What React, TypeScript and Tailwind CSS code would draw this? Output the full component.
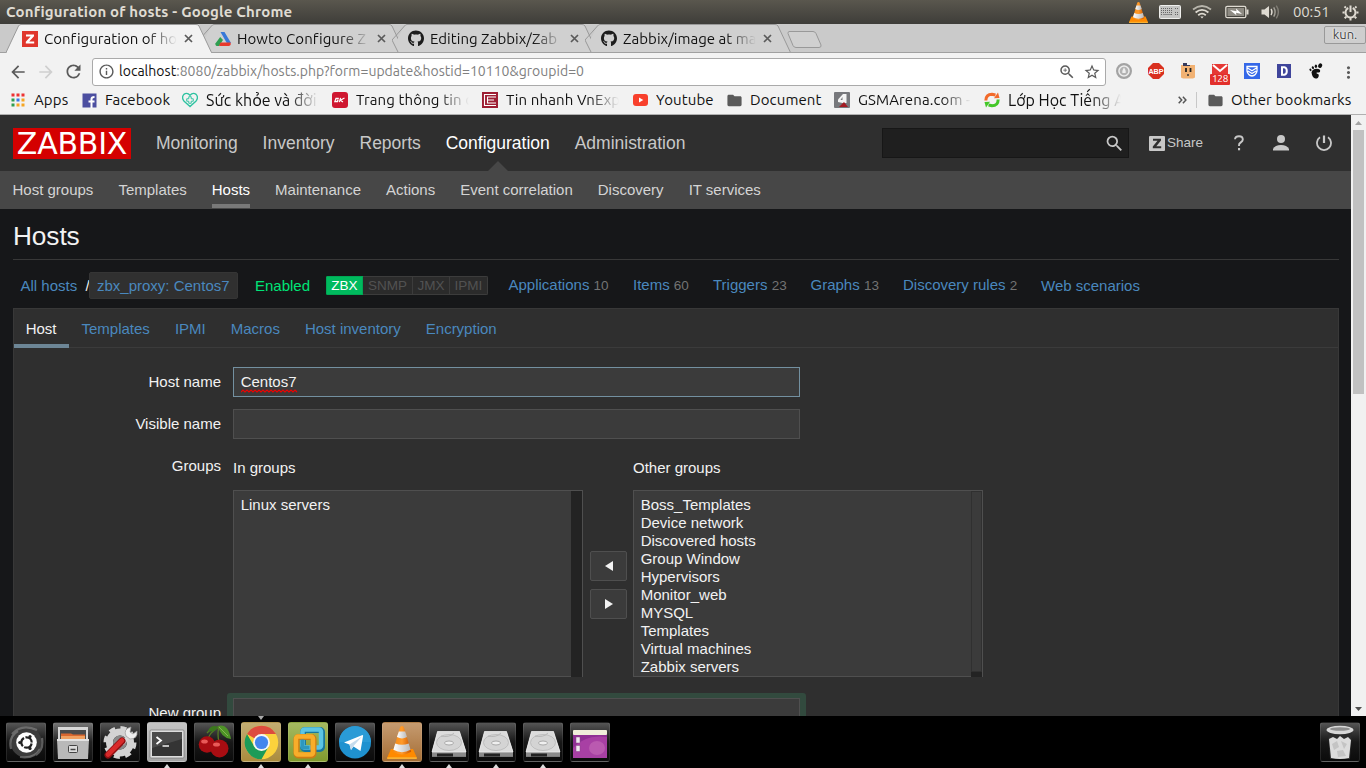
import React from "react";
import { FaGithub } from "react-icons/fa";
import { MdRefresh, MdArrowBack, MdArrowForward, MdInfoOutline, MdZoomIn, MdStarBorder, MdMoreVert, MdFolder, MdSearch } from "react-icons/md";

const fade = "[mask-image:linear-gradient(to_right,black_calc(100%-30px),transparent)]";

/* ---------- System bar ---------- */

function Cone({ size }: { size: number }) {
  return (
    <svg width={size} height={size} viewBox="0 0 32 36">
      <defs>
        <linearGradient id="coneBody" x1="0" x2="1">
          <stop offset="0" stopColor="#f58a12" />
          <stop offset=".5" stopColor="#ff9a2a" />
          <stop offset="1" stopColor="#c95400" />
        </linearGradient>
        <linearGradient id="coneWhite" x1="0" x2="1">
          <stop offset="0" stopColor="#fff" />
          <stop offset="1" stopColor="#b9b9b9" />
        </linearGradient>
      </defs>
      <path d="M4 25H28L32 34V36H0V34Z" fill="#ff8a00" />
      <path d="M0 34H32V36H0Z" fill="#f9b233" />
      <path d="M14 1Q16-1 18 1L26 28Q16 34 6 28Z" fill="url(#coneBody)" />
      <path d="M12.5 6H19.5L21.5 12Q16 15 10.5 12Z" fill="url(#coneWhite)" />
      <path d="M8.6 19Q16 22 23.4 19L25.4 26Q16 31 6.6 26Z" fill="url(#coneWhite)" />
    </svg>
  );
}

function SystemBar() {
  return (
    <div className="flex h-6 shrink-0 items-center bg-linear-to-b from-[#5a574e] to-[#3e3d39] pr-[7px] pl-[6px] text-[#dfdbd2]">
      <span className="text-[15px] font-bold tracking-[0.17px] whitespace-nowrap">Configuration of hosts - Google Chrome</span>
      <div className="ml-auto flex items-center">
        <div className="mr-[10px] flex"><Cone size={21} /></div>
        <svg className="mr-[11px]" width="22" height="14" viewBox="0 0 22 14">
          <rect x=".5" y=".5" width="21" height="13" rx="1" fill="#c4c4c2" stroke="#efefed" />
          <path d="M2 3.5H14M2 5.5H14M2 7.5H14M2 9.5H14M16 3.5H20M16 7.5H20M16 9.5H20" stroke="#666" strokeDasharray="1 1" />
          <path d="M4 9.5H12" stroke="#888" />
        </svg>
        <svg className="mr-[13px]" width="20" height="16" viewBox="0 0 20 16" fill="none" strokeWidth="1.8" stroke="#dfdbd2">
          <path d="M1 5.5Q10-1.5 19 5.5" stroke="#b8b5ac" />
          <path d="M3.6 8.5Q10 3.2 16.4 8.5" />
          <path d="M6.2 11.2Q10 8 13.8 11.2" />
          <path d="M8.3 12.5H11.7L10 14.6Z" fill="#dfdbd2" stroke="none" />
        </svg>
        <svg className="mr-[12px]" width="24" height="14" viewBox="0 0 24 14">
          <rect x=".8" y="1.3" width="20" height="11.4" rx="1.5" fill="none" stroke="#dfdbd2" strokeWidth="1.3" />
          <rect x="2.5" y="3" width="16.5" height="8" fill="#8e8b83" />
          <path d="M22.5 4.5V9.5" stroke="#dfdbd2" strokeWidth="2" />
          <path d="M5 5L11.5 6.2L11 3.6L17 9L11 7.7L11.4 10.2Z" fill="#fff" />
        </svg>
        <svg className="mr-[12px]" width="20" height="16" viewBox="0 0 20 16" fill="none">
          <path d="M.5 5.5H3.5L8 2V14L3.5 10.5H.5Z" fill="#dfdbd2" />
          <path d="M10 5Q12 8 10 11" stroke="#dfdbd2" strokeWidth="1.4" />
          <path d="M12.7 3.3Q15.5 8 12.7 12.7" stroke="#a5a299" strokeWidth="1.4" />
          <path d="M15.3 1.6Q19.5 8 15.3 14.4" stroke="#807d75" strokeWidth="1.4" />
        </svg>
        <span className="mr-[13px] w-[36px] text-[15px] tracking-[-0.2px]">00:51</span>
        <svg width="17" height="17" viewBox="0 0 17 17" fill="none" stroke="#dfdbd2">
          <path d="M6.3 4A5 5 0 1 0 10.7 4" strokeWidth="2" />
          <path d="M8.5 1.5V8" strokeWidth="2" />
          <path d="M3.9 3.9L2.5 2.5M13.1 3.9L14.5 2.5M2.6 8.5H.5M14.4 8.5H16.5M4.3 12.7L2.7 14.3M12.7 12.7L14.3 14.3M8.5 14V16.5" strokeWidth="2" />
        </svg>
      </div>
    </div>
  );
}

/* ---------- Browser chrome ---------- */

function Tab({ title, icon, active }: { title: string; icon: React.ReactNode; active?: boolean }) {
  return (
    <div className={`relative flex h-[29px] w-[193px] shrink-0 items-center pl-4 ${active ? "z-10" : ""}`}>
      <svg className="absolute top-0 left-0" width="207" height="29" viewBox="0 0 207 29">
        {active ? (
          <path d="M0 28.5L12.5 2Q13.5 .5 15 .5H190Q192 .5 193 2L205.5 28.5" fill="#f2f2f2" stroke="#999" />
        ) : (
          <path d="M5 16L12.5 2Q13.5 .5 15 .5H190Q192 .5 193 2L205.5 28.5H6L0 16" fill="#d0d0d0" stroke="none" />
        )}
        {!active && <path d="M0 16L6 28M0 16L12.5 2Q13.5 .5 15 .5H190Q192 .5 193 2L205.5 28.5" fill="none" stroke="#999" />}
        <path d={active ? "M1 28.5H205" : "M0 28.5H207"} stroke={active ? "#f2f2f2" : "#a0a0a0"} />
      </svg>
      <span className="relative flex size-4 items-center justify-center">{icon}</span>
      <span className={`relative ml-[6px] w-[133px] overflow-hidden pt-px text-[15px] leading-5 tracking-[0.03px] whitespace-nowrap text-[#111] ${fade}`}>{title}</span>
      <svg className="relative ml-[7px]" width="9" height="9" viewBox="0 0 9 9"><path d="M1 1L8 8M8 1L1 8" stroke="#5a5a5a" strokeWidth="1.7" /></svg>
    </div>
  );
}

function TabStrip() {
  return (
    <div className="relative flex h-[29px] shrink-0 bg-[#cacaca] pl-[6px] shadow-[inset_0_-1px_0_#a0a0a0]">
      <Tab active title="Configuration of ho" icon={
        <svg width="16" height="16"><rect width="16" height="16" fill="#e0362c" /><path d="M4 3.5H12V5.3L7.2 10.5H12.2V12.5H3.8V10.7L8.6 5.5H4Z" fill="#fff" /></svg>
      } />
      <Tab title="Howto Configure Z" icon={
        <svg width="16" height="16" viewBox="0 0 16 16">
          <path d="M5.5 1H9.5L16 12H11.8Z" fill="#3878d8" />
          <path d="M5.2 6L8 9L4 15H1.5Q0 14 .4 12.5Z" fill="#2e9e50" />
          <path d="M5.5 11.5H15.5Q16.5 14.6 14 15H4Z" fill="#e8382c" />
        </svg>
      } />
      <Tab title="Editing Zabbix/Zab" icon={<FaGithub size={17} color="#1c1c1c" />} />
      <Tab title="Zabbix/image at ma" icon={<FaGithub size={17} color="#1c1c1c" />} />
      <svg className="mt-[6px] ml-[9px]" width="36" height="19" viewBox="0 0 36 19"><path d="M2 1.5H26Q28 1.5 29 3.5L34 15Q34.5 17.5 32 17.5H9Q7 17.5 6 15.5L1 3.5Q.8 1.8 2 1.5Z" fill="#d0d0d0" stroke="#999" /></svg>
      <div className="mt-[2px] ml-auto flex h-[18px] w-[42px] items-center justify-center rounded-[2px] border border-[#999] bg-[#cecece] text-[13px] text-[#444] [text-shadow:0_0_2px_white,0_0_2px_white]">kun.</div>
    </div>
  );
}

function Toolbar() {
  return (
    <div className="flex h-[33px] shrink-0 items-center bg-[#f2f2f2] pt-[4px] pr-[2px]">
      <div className="flex w-[92px] items-center pl-[8px] text-[#5a5a5a]">
        <MdArrowBack size={20} />
        <MdArrowForward size={20} className="ml-[8px] text-[#cfcfcf]" />
        <MdRefresh size={21} className="ml-[7px]" />
      </div>
      <div className="flex h-[28px] w-[1014px] items-center rounded-[3px] border border-[#aaa] bg-white pr-[4px] pl-[5px] text-[#5a5a5a]">
        <MdInfoOutline size={17} />
        <span className="ml-[4px] text-[14px] tracking-[0.025px] whitespace-nowrap text-[#808080]"><span className="text-[#111]">localhost</span>:8080/zabbix/hosts.php?form=update&amp;hostid=10110&amp;groupid=0</span>
        <MdZoomIn size={18} className="ml-auto" />
        <MdStarBorder size={18} className="ml-[7px]" />
      </div>
      <div className="mt-px ml-[2px] grid grid-cols-8 justify-items-center [&>*]:flex [&>*]:w-8 [&>*]:justify-center">
        <span><svg width="16" height="16" viewBox="0 0 16 16"><circle cx="8" cy="8" r="6.9" fill="#eee" stroke="#a3a3a3" strokeWidth="2.2" /><circle cx="8" cy="8" r="4.3" fill="#b3b3b3" /><path d="M8 4.5Q5.5 8 6.5 10H9.5Q10.5 8 8 4.5" fill="#eee" /></svg></span>
        <span><svg width="16" height="16" viewBox="0 0 16 16"><path d="M5 0H11L16 5V11L11 16H5L0 11V5Z" fill="#d9301f" /><text x="8" y="10.8" textAnchor="middle" fontFamily="Liberation Sans, sans-serif" fontWeight="700" fontSize="7.2" fill="#fff">ABP</text></svg></span>
        <span><svg width="16" height="16" viewBox="0 0 16 16"><path d="M1 2H15V14.5L13 15.5H3L1 14.5Z" fill="#f2b273" /><path d="M3 0H7V2H10V3H3Z" fill="#353a5c" /><path d="M6 5V9M10.5 5V9" stroke="#222" strokeWidth="1.8" /><path d="M7 12H9" stroke="#333" strokeWidth="1.5" /></svg></span>
        <span className="relative">
          <svg width="16" height="16" viewBox="0 0 16 16"><rect y="1" width="16" height="13" fill="#e53935" /><path d="M1 2L8 8L15 2" fill="none" stroke="#fff" strokeWidth="2" /></svg>
          <b className="absolute top-[11px] left-[6px] flex h-[11px] w-[20px] items-center justify-center rounded-[1px] bg-[#e22f2b] text-[10px] leading-none font-normal tracking-[-0.3px] text-white">128</b>
        </span>
        <span><svg width="16" height="16" viewBox="0 0 16 16"><rect width="16" height="16" fill="#3568e8" /><path d="M3 3.5H13V8Q12 12.5 8 13Q4 12.5 3 8ZM3.5 5L8 7.7L12.5 5M4 8L8 10.5L12 8" fill="none" stroke="#fff" strokeWidth="1.3" /></svg></span>
        <span><svg width="16" height="16" viewBox="0 0 16 16"><rect x="1" y="1" width="14" height="14" fill="#3f459b" /><path d="M6 4.2H8.3Q10.8 4.6 10.8 8T8.3 11.8H6Z" fill="none" stroke="#fff" strokeWidth="2" /></svg></span>
        <span><svg width="16" height="16" viewBox="0 0 16 16" fill="#111"><path d="M3.5 9.3Q4.5 5.8 8.5 5.8Q13 5.8 12 9Q10.5 9.8 8.8 9.5Q7.8 10.5 9.3 10.8Q11 11 10.8 12.7Q10.3 15.6 7.6 15.6Q4.2 15.3 3.5 9.3Z" /><ellipse cx="12" cy="2.6" rx="1.9" ry="2.4" transform="rotate(25 12 3)" /><ellipse cx="7.9" cy="3.2" rx="1.2" ry="1.8" /><ellipse cx="5" cy="4.6" rx="1.1" ry="1.5" transform="rotate(-20 5 5)" /><ellipse cx="2.6" cy="6.6" rx="1" ry="1.3" transform="rotate(-30 3 7)" /></svg></span>
        <span><MdMoreVert size={19} color="#5a5a5a" /></span>
      </div>
    </div>
  );
}

function Bookmark({ width, icon, label, faded, large }: { width: string; icon: React.ReactNode; label: string; faded?: boolean; large?: boolean }) {
  return (
    <div className={`flex shrink-0 items-center gap-2 ${width}`}>
      <span className="flex size-4 shrink-0 items-center justify-center">{icon}</span>
      <span className={`overflow-hidden leading-6 whitespace-nowrap ${large ? "text-[16px]" : "text-[15px] tracking-[0.12px]"} ${faded ? `w-[113px] ${fade}` : ""}`}>{label}</span>
    </div>
  );
}

function Bookmarks() {
  const colors = ["#e33", "#e33", "#e33", "#2e9e50", "#3878e8", "#f5a623", "#2e9e50", "#f5a623", "#f5a623"];
  return (
    <div className="flex h-[29px] shrink-0 items-center border-b border-[#b0b0b0] bg-[#f2f2f2] pl-[10px] text-[#111]">
      <Bookmark width="w-[71px]" label="Apps" icon={
        <svg width="14" height="14">{colors.map((c, i) => <rect key={i} x={(i % 3) * 5 + 0.5} y={Math.floor(i / 3) * 5 + 0.5} width="3" height="3" fill={c} />)}</svg>
      } />
      <Bookmark width="w-[101px]" label="Facebook" icon={
        <svg width="15" height="15"><rect width="14" height="14" x=".5" y=".5" fill="#4c4fa0" /><path d="M9.5 15V6Q9.5 4 12.5 4M6.5 8.5H12.5" fill="none" stroke="#fff" strokeWidth="2" /></svg>
      } />
      <Bookmark width="w-[150px]" faded large label="Sức khỏe và đời" icon={
        <svg width="17" height="16" viewBox="0 0 17 16" fill="none" stroke="#2cc2a0"><path d="M8.5 15L2 9Q-.8 5 2 2Q5.5-.5 8.5 3Q11.5-.5 15 2Q17.8 5 15 9Z" strokeWidth="1.4" /><path d="M7.2 4.5H9.8V6.7H12V9.3H9.8V11.5H7.2V9.3H5V6.7H7.2Z" /></svg>
      } />
      <Bookmark width="w-[150px]" faded label="Trang thông tin c" icon={
        <svg width="16" height="16"><rect width="16" height="16" rx="3" fill="#cf1730" /><path d="M6.8 6.3H4L2.8 9.7H5.5L6 8H4.6M8.6 5.8L7.3 10.2M12.5 6L8.3 8.2L11 10" fill="none" stroke="#fff" strokeWidth="1.2" /></svg>
      } />
      <Bookmark width="w-[150px]" faded label="Tin nhanh VnExp" icon={
        <svg width="16" height="16"><rect width="16" height="16" fill="#9e1e33" /><path d="M14 2.5H2.5V13.5H14M14 5H5.5V11H14M6 8H12" fill="none" stroke="#fff" strokeWidth="1.1" /></svg>
      } />
      <Bookmark width="w-[94px]" label="Youtube" icon={
        <svg width="15" height="12"><rect width="15" height="12" rx="3" fill="#f8402c" /><path d="M6 3.5L10.3 6L6 8.5Z" fill="#fff" /></svg>
      } />
      <Bookmark width="w-[108px]" label="Document" icon={<MdFolder size={17} color="#5a5a5a" className="shrink-0" />} />
      <Bookmark width="w-[150px]" faded label="GSMArena.com -" icon={
        <svg width="16" height="16"><rect width="16" height="16" rx="1" fill="#77787c" /><path d="M12.5 2V11H8.5L4 10V7.5L9 2Z" fill="#f4f4f4" /><path d="M8.5 5V8H6.5Z" fill="#77787c" /><path d="M5 15L10 10L14 15Z" fill="#a31b23" /></svg>
      } />
      <Bookmark width="w-[150px]" faded large label="Lớp Học Tiếng A" icon={
        <svg width="16" height="16" fill="none" strokeWidth="3"><path d="M1.8 8.5Q2 2.2 8 2.2L11.5 3" stroke="#f26a2a" /><path d="M14.2 7.5Q14 13.8 8 13.8L4.5 13" stroke="#43c728" /><path d="M10 6.3L15.5 6L14 .5Z" fill="#f26a2a" /><path d="M6 9.7L.5 10L2 15.5Z" fill="#43c728" /></svg>
      } />
      <div className="ml-auto flex items-center pr-[14px]">
        <svg width="9" height="8" viewBox="0 0 9 8" fill="none" stroke="#555" strokeWidth="1.5"><path d="M.7.8L3.7 4L.7 7.2M4.9.8L7.9 4L4.9 7.2" /></svg>
        <i className="ml-[9px] h-[16px] w-px bg-[#c8c8c8]" />
        <MdFolder size={17} color="#5a5a5a" className="ml-[10px]" />
        <span className="ml-[7px] w-[121px] text-[15px] tracking-[0.18px] whitespace-nowrap">Other bookmarks</span>
      </div>
    </div>
  );
}

/* ---------- Zabbix page ---------- */

function Header() {
  const main = ["Monitoring", "Inventory", "Reports", "Configuration", "Administration"];
  const sub = ["Host groups", "Templates", "Hosts", "Maintenance", "Actions", "Event correlation", "Discovery", "IT services"];
  return (
    <header className="shrink-0">
      <div className="flex h-[56px] items-center bg-[#2f2f2f] pl-[13px] text-[#c8c8c8]">
        <div className="flex h-[31px] w-[118px] items-center justify-center bg-[#d40000] pt-[2px] font-['DejaVu_Sans',sans-serif] text-[30px] leading-none tracking-[-0.2px] text-white">ZABBIX</div>
        <nav className="ml-[25px] flex gap-[25px] text-[17.5px] leading-[56px] tracking-[-0.01px]">
          {main.map((m) => (
            <span key={m} className={m === "Configuration" ? "relative text-white" : ""}>
              {m}
              {m === "Configuration" && <svg className="absolute bottom-0 left-1/2 -translate-x-1/2" width="20" height="10"><path d="M0 10L10 0L20 10Z" fill="#474747" /></svg>}
            </span>
          ))}
        </nav>
        <div className="ml-auto flex h-[30px] w-[247px] items-center justify-end border border-[#171717] bg-[#1f1f1f] pr-[3px]">
          <MdSearch size={21} />
        </div>
        <div className="flex w-[222px] items-center pl-[20px]">
          <svg width="16" height="15" viewBox="0 0 16 15"><rect width="16" height="15" rx="1" fill="#c8c8c8" /><path d="M4 2.8H12V4.6L7.3 10.2H12.2V12.2H3.8V10.4L8.5 4.8H4Z" fill="#2f2f2f" /></svg>
          <span className="ml-[2px] w-[37px] text-[13.5px]">Share</span>
          <svg className="ml-[30px]" width="10" height="16" viewBox="0 0 10 16"><path d="M1 4.3Q1.2 1.2 5 1.2T8.8 4.5Q8.8 6 6.8 7.4T5 10.4V11" fill="none" stroke="#c8c8c8" strokeWidth="1.9" /><rect x="4" y="13" width="2.1" height="2.3" fill="#c8c8c8" /></svg>
          <svg className="ml-[29px]" width="16" height="16" viewBox="0 0 16 16" fill="#c8c8c8"><circle cx="8" cy="4" r="4" /><path d="M0 15.5V14Q2 10 8 10T16 14V15.5Z" /></svg>
          <svg className="ml-[27px]" width="16" height="16" viewBox="0 0 16 16" fill="none" stroke="#c8c8c8" strokeWidth="1.8"><path d="M4 2.3A7 7 0 1 0 12 2.3" /><path d="M8 .5V8" strokeWidth="2.2" /></svg>
        </div>
      </div>
      <nav className="flex h-[38px] gap-[25px] bg-[#474747] pl-[12.5px] text-[15px] leading-[38px] text-[#d4d4d4]">
        {sub.map((m) => (
          <span key={m} className={m === "Hosts" ? "h-[37px] border-b-4 border-[#797979] text-white" : ""}>{m}</span>
        ))}
      </nav>
    </header>
  );
}

function Crumbs() {
  const badge = "flex h-full items-center border border-l-0 border-[#3c3c3c] justify-center pt-[2px]";
  const links: [string, string, string][] = [
    ["Applications", "10", "w-[124.5px]"],
    ["Items", "60", "w-[80px]"],
    ["Triggers", "23", "w-[97.5px]"],
    ["Graphs", "13", "w-[92.5px]"],
    ["Discovery rules", "2", "w-[138px]"],
  ];
  return (
    <div className="flex h-[48px] items-center pt-[5px] pl-[7.5px] text-[15px] whitespace-nowrap text-[#4a88be]">
      <span className="w-[65px]">All hosts</span>
      <span className="w-[3.5px] text-[#f2f2f2]">/</span>
      <span className="-mt-[3px] flex h-[27px] w-[149px] items-center rounded-[2px] border border-[#353535] bg-[#303030] pt-[3px] pl-[7px]">zbx_proxy: Centos7</span>
      <span className="ml-[17px] w-[71px] text-[#00e477]">Enabled</span>
      <div className="-mt-[3px] flex h-[19px] w-[162px] overflow-hidden rounded-[2px] bg-[#2b2b2b] text-[13.5px] text-[#525252]">
        <span className="flex w-[37px] items-center justify-center border border-[#00a854] bg-[#00ba5e] pt-[2px] text-white">ZBX</span>
        <span className={`${badge} w-[50px]`}>SNMP</span>
        <span className={`${badge} w-[37px]`}>JMX</span>
        <span className={`${badge} w-[38px]`}>IPMI</span>
      </div>
      <div className="ml-[20.5px] flex">
        {links.map(([t, n, w]) => (
          <span key={t} className={`-mt-px ${w}`}>{t} <span className="text-[13.5px] text-[#737373]">{n}</span></span>
        ))}
        <span>Web scenarios</span>
      </div>
    </div>
  );
}

function ListBox({ items, thumb }: { items: string[]; thumb?: boolean }) {
  return (
    <div className="flex h-[187px] w-[350px] border border-[#4f4f4f] bg-[#3b3b3b]">
      <ul className="flex-1 pt-[5px] pl-[6.7px] leading-[18px]">
        {items.map((i) => <li key={i}>{i}</li>)}
      </ul>
      <div className="h-[186px] w-[11px] bg-[#232323]">
        {thumb && <div className="h-[181px] border border-[#303030] bg-[#3b3b3b]" />}
      </div>
    </div>
  );
}

function Form() {
  const groups = ["Boss_Templates", "Device network", "Discovered hosts", "Group Window", "Hypervisors", "Monitor_web", "MYSQL", "Templates", "Virtual machines", "Zabbix servers"];
  const label = "w-[207px] shrink-0 text-right";
  const field = "h-[30px] w-[567px] border bg-[#3b3b3b] pl-[6.7px] leading-[28px]";
  const btn = "flex h-[30px] w-[37px] items-center justify-center rounded-[2px] border border-[#4f4f4f] bg-[#3b3b3b]";
  return (
    <div className="flex flex-col gap-[12px] pt-[19px] text-[15px] text-[#f2f2f2]">
      <div className="flex gap-[12px] leading-[30px]">
        <div className={label}>Host name</div>
        <div className={`${field} border-[#7390a0]`}>
          <span className="relative inline-block">
            Centos7
            <svg className="absolute bottom-[3px] left-0" width="57" height="4"><path d="M0 3L2 1L4 3L6 1L8 3L10 1L12 3L14 1L16 3L18 1L20 3L22 1L24 3L26 1L28 3L30 1L32 3L34 1L36 3L38 1L40 3L42 1L44 3L46 1L48 3L50 1L52 3L54 1L56 3" fill="none" stroke="#f00000" strokeWidth="1.1" /></svg>
          </span>
        </div>
      </div>
      <div className="flex gap-[12px] leading-[30px]">
        <div className={label}>Visible name</div>
        <div className={`${field} border-[#4f4f4f]`} />
      </div>
      <div className="flex gap-[12px]">
        <div className={`${label} leading-[30px]`}>Groups</div>
        <div className="flex">
          <div>
            <div className="h-[39px] leading-[34px]">In groups</div>
            <ListBox items={["Linux servers"]} />
          </div>
          <div className="flex w-[50px] flex-col gap-[8px] pt-[100px] pl-[7px]">
            <div className={btn}><svg width="8" height="10"><path d="M8 0V10L0 5Z" fill="#f2f2f2" /></svg></div>
            <div className={btn}><svg width="8" height="10"><path d="M0 0V10L8 5Z" fill="#f2f2f2" /></svg></div>
          </div>
          <div>
            <div className="h-[39px] leading-[34px]">Other groups</div>
            <ListBox items={groups} thumb />
          </div>
        </div>
      </div>
      <div className="mt-[4px] flex gap-[6px]">
        <div className={`${label} pt-[5px] leading-[30px]`}>New group</div>
        <div className="h-[40px] rounded-[3px] bg-[#324a3e] p-[5px_6px]">
          <div className={`${field} border-[#4f4f4f]`} />
        </div>
      </div>
    </div>
  );
}

function Page() {
  const tabs = ["Templates", "IPMI", "Macros", "Host inventory", "Encryption"];
  return (
    <div className="flex h-[601px] shrink-0 overflow-hidden bg-[#161719] font-['Liberation_Sans',Arial,sans-serif]">
      <div className="w-[1351px]">
        <Header />
        <main className="px-[13px] pr-[12px]">
          <h1 className="h-[51px] border-b border-[#383838] text-[26.25px] leading-[54px] tracking-[-0.1px] text-[#f2f2f2]">Hosts</h1>
          <Crumbs />
          <section className="h-[500px] border border-[#383838] bg-[#2f2f2f]">
            <div className="flex h-[39px] gap-[25px] border-b border-[#3b3b3b] text-[15px] leading-[40px] text-[#4a88be]">
              <span className="-mr-[12.5px] h-[39px] w-[55px] border-b-4 border-[#6d8696] pl-[11.7px] text-[#f2f2f2]">Host</span>
              {tabs.map((t) => <span key={t}>{t}</span>)}
            </div>
            <Form />
          </section>
        </main>
      </div>
      <div className="flex w-[15px] flex-col items-center justify-between bg-[#f1f1f1] pb-[5px]">
        <div>
          <div className="flex h-[15px] items-center justify-center pt-[1px]"><svg width="7" height="4"><path d="M0 4L3.5 0L7 4Z" fill="#a3a3a3" /></svg></div>
          <div className="h-[264px] w-[11px] bg-[#c1c1c1]" />
        </div>
        <svg width="7" height="4"><path d="M0 0L3.5 4L7 0Z" fill="#505050" /></svg>
      </div>
    </div>
  );
}

/* ---------- Dock ---------- */

function Tile({ children, tone = "bg-linear-to-b from-[#555] via-[#181818] to-[#0b0b0b]", running, top }: { children: React.ReactNode; tone?: string; running?: boolean; top?: boolean }) {
  return (
    <div className="relative flex h-[52px] w-10 shrink-0 flex-col pt-[6px]">
      {top && <svg className="absolute top-0 left-[17px]" width="6" height="4"><path d="M0 0H6L3 4Z" fill="#aaa" /></svg>}
      <div className={`flex size-10 items-center justify-center rounded-[3px] border border-[#ffffff18] ${tone}`}>
        <svg width="38" height="38" viewBox="1 1 38 38">{children}</svg>
      </div>
      {running && <svg className="absolute bottom-0 left-[17px]" width="6" height="4"><path d="M0 4L3 0L6 4Z" fill="#ddd" /></svg>}
    </div>
  );
}

function Disk() {
  return (
    <Tile running>
      <path d="M8.5 9.5H30.5L37 29V34.5H3V29Z" fill="#c9c9c9" />
      <path d="M8.5 9.5H30.5L37 30H3Z" fill="#dcdcdc" stroke="#f5f5f5" strokeWidth=".6" />
      <ellipse cx="20" cy="20.5" rx="12.5" ry="8" fill="#d4d4d4" stroke="#b8b8b8" strokeWidth=".8" />
      <ellipse cx="20" cy="21" rx="4.5" ry="2" fill="#efefef" stroke="#999" strokeWidth=".8" />
      <path d="M12 14Q20 16 25 11" fill="none" stroke="#aaa" strokeWidth=".7" />
      <path d="M3 30.5H37V34.5H3Z" fill="#8a8a8a" /><path d="M8 31.5H24V34.5H8Z" fill="#222" />
    </Tile>
  );
}

function Dock() {
  return (
    <div className="flex h-[52px] shrink-0 gap-[7px] bg-black px-[6px]">
      <Tile>
        <circle cx="20" cy="20" r="15.5" fill="#3c3c3c" />
        <path d="M6 12Q16 1 31 8M34 27Q29 37 14 35M5 27Q2 15 12 9M36 16Q38 28 30 33" fill="none" stroke="#8a8a8a" strokeWidth="2.2" opacity=".6" />
        <circle cx="20.5" cy="20.5" r="10.3" fill="#fff" />
        <circle cx="20.5" cy="20.5" r="5.2" fill="none" stroke="#222" strokeWidth="2.2" strokeDasharray="9.4 1.5" strokeDashoffset="-1" />
        <circle cx="13.8" cy="20.5" r="1.6" fill="#222" /><circle cx="24" cy="14.6" r="1.6" fill="#222" /><circle cx="24" cy="26.4" r="1.6" fill="#222" />
      </Tile>
      <Tile tone="bg-linear-to-b from-[#777] via-[#222] to-[#111]">
        <path d="M5 5H35V17H5Z" fill="#d8d8d8" /><path d="M7 8H33V17H7Z" fill="#4a4a4a" />
        <path d="M8 11.5H18L20 12.5H32V18H8Z" fill="#d9672f" /><path d="M8 14H32V18H8Z" fill="#f0a060" />
        <path d="M4 17H36L35 37H5Z" fill="#b9b9b9" /><path d="M4 17H36V19H4Z" fill="#e3e3e3" />
        <rect x="15.5" y="23.5" width="9" height="7" rx="1" fill="#ddd" stroke="#444" /><path d="M17.5 27.5H22.5" stroke="#444" strokeWidth="1.5" />
      </Tile>
      <Tile>
        <circle cx="20" cy="20.5" r="10.5" fill="none" stroke="#d3d3d3" strokeWidth="7" />
        <circle cx="20" cy="20.5" r="14.5" fill="none" stroke="#d3d3d3" strokeWidth="4" strokeDasharray="6 5.39" />
        <circle cx="20" cy="20.5" r="7" fill="#8a8a8a" />
        <path d="M22 22L30 13" stroke="#d8d8d8" strokeWidth="4" />
        <path d="M26 14Q23 7 31 5L30 10L33 12L37 9Q38 17 30 17Z" fill="#eee" stroke="#999" strokeWidth=".7" />
        <path d="M8 33L22 19" stroke="#8e0f12" strokeWidth="7" strokeLinecap="round" /><path d="M8 32.5L22 18.5" stroke="#d82a2a" strokeWidth="4.6" strokeLinecap="round" />
      </Tile>
      <Tile running tone="bg-linear-to-b from-[#c4c4c4] to-[#a5a5a5]">
        <rect x="3" y="8" width="34" height="28" rx="1" fill="#ddd" stroke="#777" strokeWidth=".7" />
        <rect x="5" y="10" width="30" height="24" fill="#343434" /><path d="M5 10H35V17L5 26Z" fill="#555" opacity=".7" />
        <path d="M9.5 15L14 18.5L9.5 22" fill="none" stroke="#fff" strokeWidth="1.8" /><path d="M15.5 24H22" stroke="#fff" strokeWidth="1.4" />
      </Tile>
      <Tile>
        <path d="M13 20Q15 10 25 5Q23 12 25 20M25 5Q17 6 13 11" fill="none" stroke="#567c25" strokeWidth="1.3" />
        <path d="M24 4Q34 1 37 17Q27 16 24 4Z" fill="#4d9226" /><path d="M24 5Q17 2 14 9Q21 11 24 5Z" fill="#3a761c" /><path d="M25 5L34 14" stroke="#91bd5c" strokeWidth=".8" />
        <circle cx="13" cy="22.5" r="8.3" fill="#a80d12" /><circle cx="25.5" cy="26.5" r="9" fill="#a80d12" />
        <ellipse cx="10.5" cy="19.5" rx="3.3" ry="2" fill="#e85a58" /><ellipse cx="22.5" cy="22.5" rx="3.5" ry="2" fill="#e85a58" />
      </Tile>
      <Tile running top tone="bg-linear-to-b from-[#c3ad72] to-[#aa8c3d]">
        <circle cx="20.5" cy="20.5" r="16.7" fill="#fbd23c" />
        <path d="M20.5 20.5L6 12.1A16.7 16.7 0 0 1 35 12.1H20.5Z" fill="#dd4b3e" />
        <path d="M6 12.1A16.7 16.7 0 0 0 20.5 37.2L27.7 24.6L20.5 28.7L13.3 24.6Z" fill="#1b9b58" />
        <circle cx="20.5" cy="20.5" r="8.4" fill="#f5f5f5" /><circle cx="20.5" cy="20.5" r="6.6" fill="#4385ee" />
      </Tile>
      <Tile running tone="bg-linear-to-b from-[#a5b960] to-[#819b2d]">
        <rect x="15" y="8" width="19" height="19" rx="2" fill="none" stroke="#19779e" strokeWidth="6" />
        <rect x="14.5" y="7.5" width="18.5" height="18" rx="2" fill="none" stroke="#5cc5e4" strokeWidth="4.5" />
        <rect x="8.5" y="15" width="17" height="18.5" rx="2" fill="none" stroke="#cf7b13" strokeWidth="6" />
        <rect x="8" y="14.5" width="17" height="18" rx="2" fill="none" stroke="#f8ad2a" strokeWidth="4.5" />
        <path d="M14.5 17.5V25.5H21.5" fill="none" stroke="#2c98bf" strokeWidth="3.5" />
      </Tile>
      <Tile>
        <circle cx="20" cy="20.5" r="16" fill="#1f92d0" /><path d="M4 20A16 16 0 0 1 36 20Z" fill="#2a9bd6" />
        <path d="M9 20.5L27.5 13Q28.5 13 28 14.5L25.5 29L18.5 24.5L16 28L14.5 22.5Z" fill="#fff" /><path d="M14.5 22.5L27 14.5L18.5 24L16 28Z" fill="#c5dced" />
      </Tile>
      <Tile running tone="bg-linear-to-b from-[#c59b70] to-[#a66f35]">
        <g transform="translate(3.5 4)"><Cone size={33} /></g>
      </Tile>
      <Disk /><Disk /><Disk />
      <Tile>
        <rect x="3" y="9" width="34" height="27" rx="1" fill="#8f3094" /><path d="M3 36V26Q15 12 37 15V36Z" fill="#a840a4" /><ellipse cx="27" cy="26" rx="8" ry="7" fill="#cc74bc" opacity=".5" />
        <rect x="3" y="8" width="34" height="5" rx="1" fill="#f0eedb" />
        <path d="M6 15H10V21H6ZM6 23.5H10V29.5H6Z" fill="#f0e8f0" stroke="#884488" strokeWidth=".5" />
      </Tile>
      <div className="ml-auto">
        <Tile>
          <path d="M8 8H32L30 37H10Z" fill="#2c2c2c" />
          <path d="M9 17L13 15L17 17L20 14L24 17L28 15L31 18L29 36Q20 38 11 36Z" fill="#dcdcdc" />
          <path d="M12 22L17 19L19 25L14 28ZM21 19L27 22L24 27ZM17 29L23 28L26 34L18 35Z" fill="#c4c4c4" />
          <ellipse cx="20" cy="8" rx="13.5" ry="4.2" fill="#d8d8d8" /><ellipse cx="20" cy="7" rx="10" ry="1.8" fill="#8d8d8d" />
        </Tile>
      </div>
    </div>
  );
}

export default function App() {
  return (
    <div className="flex h-[768px] w-[1366px] flex-col overflow-hidden bg-black font-['Ubuntu','Noto_Sans',sans-serif]">
      <SystemBar />
      <TabStrip />
      <Toolbar />
      <Bookmarks />
      <Page />
      <Dock />
    </div>
  );
}
